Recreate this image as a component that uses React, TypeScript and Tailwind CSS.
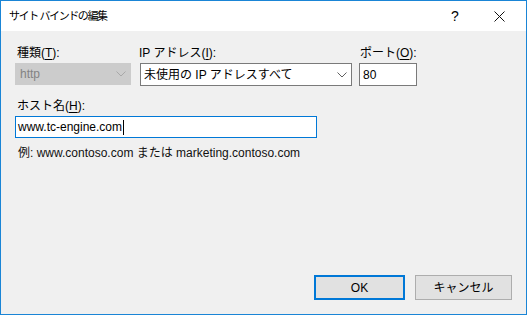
import { ReactNode } from "react";

const font = { fontFamily: '"Liberation Sans", "Noto Sans CJK JP", sans-serif' };

function Key({ children }: { children: ReactNode }) {
  return <span className="underline underline-offset-2">{children}</span>;
}

function Chevron({ color }: { color: string }) {
  return (
    <svg width="10" height="6" viewBox="0 0 10 6" className="shrink-0">
      <path d="M0.5 0.5 L5 5 L9.5 0.5" fill="none" stroke={color} strokeWidth="1" />
    </svg>
  );
}

function App() {
  return (
    <div
      className="w-[527px] h-[315px] border border-[#1a85d6] flex flex-col text-[12px] text-black overflow-hidden"
      style={font}
    >
      {/* title bar */}
      <div className="h-[30px] bg-white flex items-center pl-2 shrink-0">
        <span className="text-[11px] tracking-[-1.4px] flex-1">サイト バインドの編集</span>
        <span className="text-[14px] w-[14px] text-center">?</span>
        <div className="w-[46px] flex justify-center ml-[14px] mr-[4px]">
          <svg width="11" height="11" viewBox="0 0 11 11">
            <path d="M0.5 0.5 L10.5 10.5 M10.5 0.5 L0.5 10.5" stroke="#111" strokeWidth="1" />
          </svg>
        </div>
      </div>

      {/* body */}
      <div className="flex-1 bg-[#f0f0f0] flex flex-col px-[14px] pt-[14px] pb-[14px]">
        <div className="flex">
          <div className="w-[116px] flex flex-col">
            <div className="h-4 leading-4 pl-[2px] mb-[2px]">
              種類(<Key>T</Key>):
            </div>
            <div className="h-[22px] bg-[#cccccc] border border-[#cccccc] flex items-center pl-[4px] pr-[4px]">
              <span className="flex-1 text-[#838383]">http</span>
              <Chevron color="#a8a8a8" />
            </div>
          </div>
          <div className="w-[212px] ml-[9px] flex flex-col">
            <div className="h-4 leading-4 -ml-[1px] mb-[2px]">
              IP アドレス(<Key>I</Key>):
            </div>
            <div className="h-[23px] bg-white border border-[#7a7a7a] flex items-center pl-[3px] pr-[4px]">
              <span className="flex-1">未使用の IP アドレスすべて</span>
              <Chevron color="#606060" />
            </div>
          </div>
          <div className="w-[58px] ml-[7px] flex flex-col">
            <div className="h-4 leading-4 pl-[1px] mb-[2px]">
              ポート(<Key>O</Key>):
            </div>
            <div className="h-[23px] bg-white border border-[#7a7a7a] flex items-center pl-[3px]">
              80
            </div>
          </div>
        </div>

        <div className="h-4 leading-4 pl-[2px] mt-[12px] mb-[2px]">
          ホスト名(<Key>H</Key>):
        </div>
        <div className="w-[302px] h-[22px] bg-white border border-[#0078d7] flex items-center pl-[2px]">
          <span>www.tc-engine.com</span>
          <span className="w-px h-[15px] bg-black ml-px" />
        </div>

        <div className="h-4 leading-4 pl-[3px] mt-[7px] text-[#111]">
          例: www.contoso.com または marketing.contoso.com
        </div>

        <div className="flex-1" />

        <div className="flex justify-end gap-[10px]">
          <button className="w-[91px] h-[25px] bg-[#e1e1e1] border-2 border-[#0078d7] text-[12px]">
            OK
          </button>
          <button className="w-[97px] h-[25px] bg-[#e1e1e1] border border-[#adadad] text-[12px]">
            キャンセル
          </button>
        </div>
      </div>
    </div>
  );
}

export default App;
